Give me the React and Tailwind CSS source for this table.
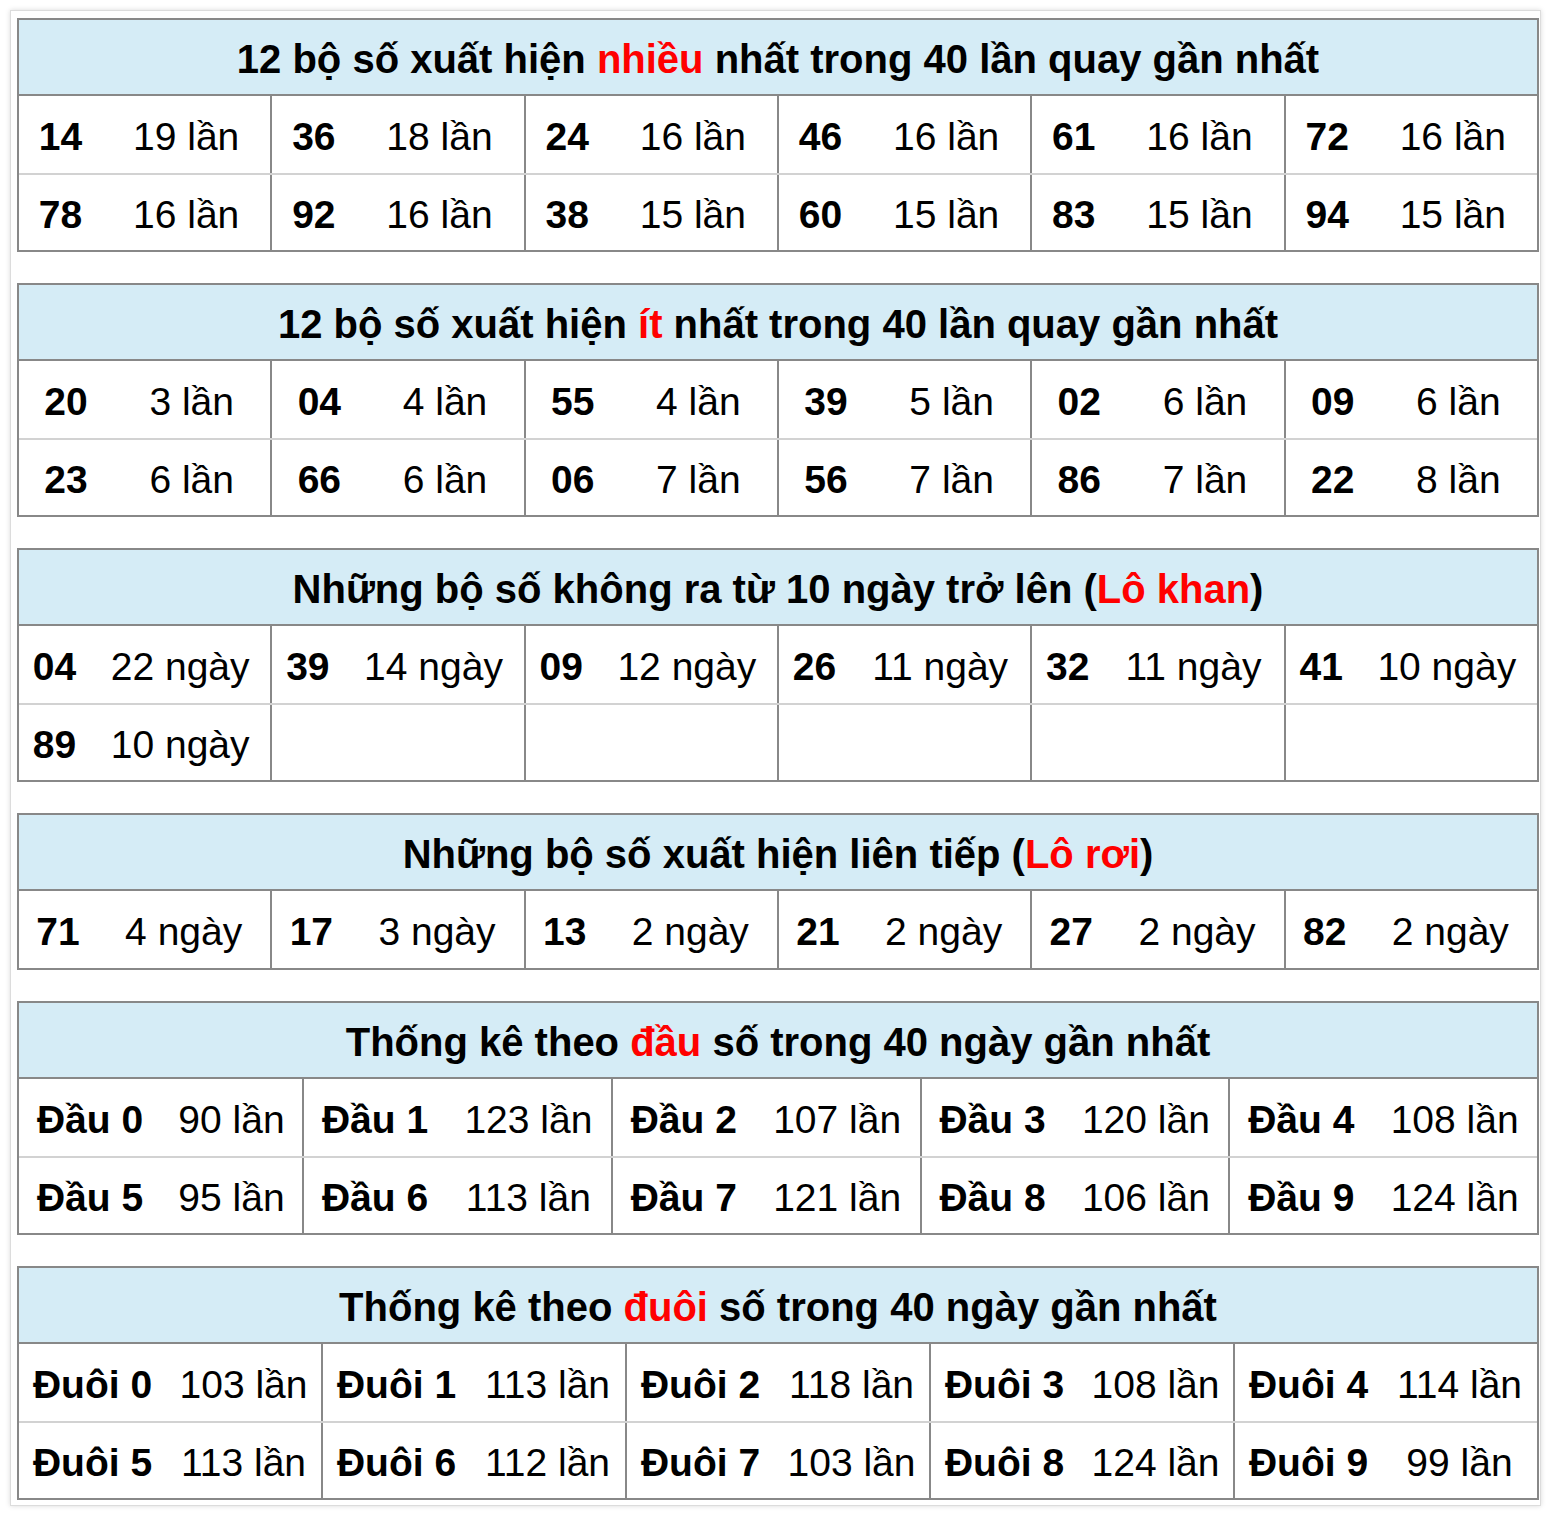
const FONT = { fontFamily: '"Liberation Sans", Arial, sans-serif' }

const tables = [
  {
    title: ['12 bộ số xuất hiện ', 'nhiều', ' nhất trong 40 lần quay gần nhất'],
    num: 'w-[83px]',
    rows: [
      [['14', '19 lần'], ['36', '18 lần'], ['24', '16 lần'], ['46', '16 lần'], ['61', '16 lần'], ['72', '16 lần']],
      [['78', '16 lần'], ['92', '16 lần'], ['38', '15 lần'], ['60', '15 lần'], ['83', '15 lần'], ['94', '15 lần']],
    ],
  },
  {
    title: ['12 bộ số xuất hiện ', 'ít', ' nhất trong 40 lần quay gần nhất'],
    num: 'w-[94px]',
    rows: [
      [['20', '3 lần'], ['04', '4 lần'], ['55', '4 lần'], ['39', '5 lần'], ['02', '6 lần'], ['09', '6 lần']],
      [['23', '6 lần'], ['66', '6 lần'], ['06', '7 lần'], ['56', '7 lần'], ['86', '7 lần'], ['22', '8 lần']],
    ],
  },
  {
    title: ['Những bộ số không ra từ 10 ngày trở lên (', 'Lô khan', ')'],
    num: 'w-[71px]',
    rows: [
      [['04', '22 ngày'], ['39', '14 ngày'], ['09', '12 ngày'], ['26', '11 ngày'], ['32', '11 ngày'], ['41', '10 ngày']],
      [['89', '10 ngày'], ['', ''], ['', ''], ['', ''], ['', ''], ['', '']],
    ],
  },
  {
    title: ['Những bộ số xuất hiện liên tiếp (', 'Lô rơi', ')'],
    num: 'w-[78px]',
    rows: [[['71', '4 ngày'], ['17', '3 ngày'], ['13', '2 ngày'], ['21', '2 ngày'], ['27', '2 ngày'], ['82', '2 ngày']]],
  },
  {
    title: ['Thống kê theo ', 'đầu', ' số trong 40 ngày gần nhất'],
    num: 'w-[142px]',
    first: 'w-[283px] shrink-0',
    rows: [
      [['Đầu 0', '90 lần'], ['Đầu 1', '123 lần'], ['Đầu 2', '107 lần'], ['Đầu 3', '120 lần'], ['Đầu 4', '108 lần']],
      [['Đầu 5', '95 lần'], ['Đầu 6', '113 lần'], ['Đầu 7', '121 lần'], ['Đầu 8', '106 lần'], ['Đầu 9', '124 lần']],
    ],
  },
  {
    title: ['Thống kê theo ', 'đuôi', ' số trong 40 ngày gần nhất'],
    num: 'w-[147px]',
    rows: [
      [['Đuôi 0', '103 lần'], ['Đuôi 1', '113 lần'], ['Đuôi 2', '118 lần'], ['Đuôi 3', '108 lần'], ['Đuôi 4', '114 lần']],
      [['Đuôi 5', '113 lần'], ['Đuôi 6', '112 lần'], ['Đuôi 7', '103 lần'], ['Đuôi 8', '124 lần'], ['Đuôi 9', '99 lần']],
    ],
  },
]

function StatTable({ table }) {
  return (
    <div className="border-2 border-[#888888]">
      <div className="flex h-[76px] items-center justify-center border-b-2 border-[#888888] bg-[#d5ecf6] pt-[3px] text-[40px] font-bold text-black">
        <span className="whitespace-pre">
          {table.title[0]}
          <span className="text-[#ff0000]">{table.title[1]}</span>
          {table.title[2]}
        </span>
      </div>
      {table.rows.map((row, r) => (
        <div key={r} className={`flex h-[77px] ${r > 0 ? 'border-t-2 border-[#d2d2d2]' : ''}`}>
          {row.map(([n, c], i) => (
            <div
              key={i}
              className={`flex items-center pt-[5px] ${i === 0 && table.first ? table.first : 'flex-1'} ${i > 0 ? 'border-l-2 border-[#888888]' : ''}`}
            >
              <span className={`${table.num} shrink-0 text-center text-[39px] font-bold text-black`}>{n}</span>
              <span className="flex-1 text-center text-[39px] text-black">{c}</span>
            </div>
          ))}
        </div>
      ))}
    </div>
  )
}

export default function App() {
  return (
    <div className="bg-white p-[10px]" style={FONT}>
      <div className="flex w-[1531px] flex-col gap-[31px] border border-[#dcdcdc] pt-[7px] pr-[1px] pb-[5px] pl-[6px] shadow-[0_0_5px_rgba(0,0,0,0.15)]">
        {tables.map((t, i) => (
          <StatTable key={i} table={t} />
        ))}
      </div>
    </div>
  )
}
